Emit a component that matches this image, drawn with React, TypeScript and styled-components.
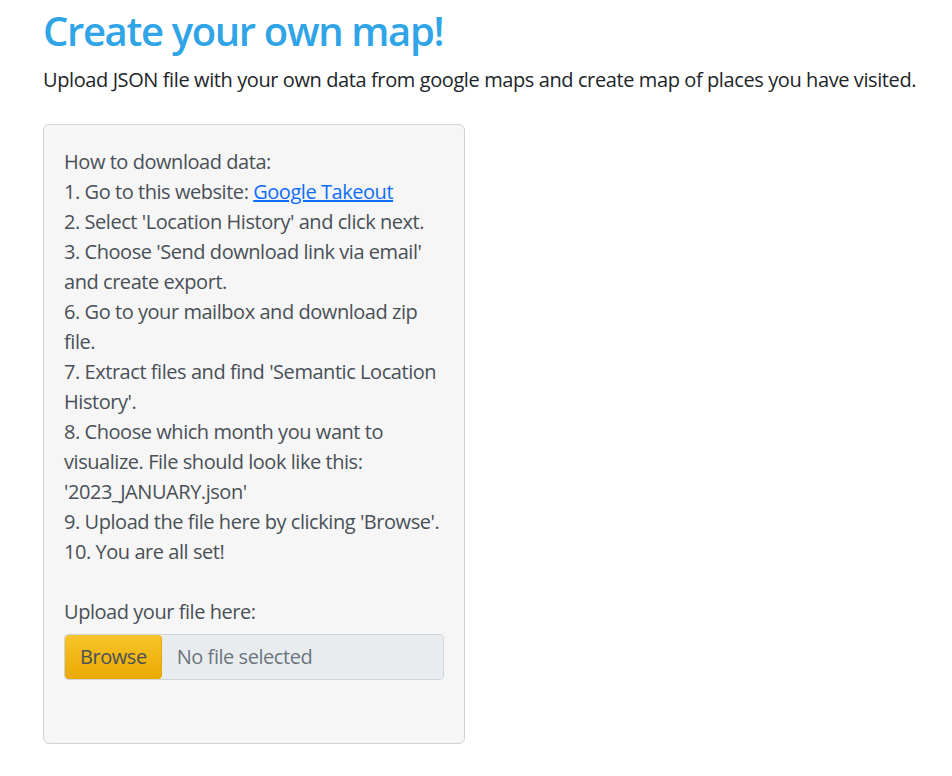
import React from 'react';
import styled, { createGlobalStyle } from 'styled-components';

const GlobalStyle = createGlobalStyle`
    html, body {
        margin: 0;
        padding: 0;
        background: #ffffff;
    }
    body {
        font-family: "Open Sans", "Noto Sans", sans-serif;
        font-size: 20px;
        line-height: 1.5;
        color: #495057;
    }
`;

const Page = styled.div`
    padding: 0 43px;
`;

const Title = styled.h1`
    margin: 0;
    padding-top: 7px;
    font-size: 40px;
    line-height: 48px;
    font-weight: 600;
    color: #2fa4e7;
    letter-spacing: -1.35px;
`;

const Lead = styled.p`
    margin: 10px 0 0;
    color: #212529;
    letter-spacing: -0.4px;
    white-space: nowrap;
`;

const Well = styled.div`
    width: 380px;
    margin-top: 29px;
    padding: 22px 20px 63px;
    background: #f6f6f6;
    border: 1px solid #d2d2d2;
    border-radius: 6px;
    letter-spacing: -0.45px;
`;

const Steps = styled.div`
    margin-bottom: 30px;
`;

const Line = styled.div`
    white-space: nowrap;
`;

const Link = styled.a`
    color: #0d6efd;
    text-decoration: underline;
`;

const Label = styled.div`
    margin-bottom: 7px;
`;

const FileInput = styled.div`
    display: flex;
    height: 46px;
    border: 1px solid #ced4da;
    border-radius: 4px;
    overflow: hidden;
    box-sizing: border-box;
`;

const BrowseButton = styled.div`
    display: flex;
    align-items: center;
    padding: 0 14px 0 15px;
    background: linear-gradient(#f9c42b, #e9a900);
    color: #495057;
    border-right: 1px solid #e4a700;
    border-radius: 4px;
`;

const FileName = styled.div`
    flex: 1;
    display: flex;
    align-items: center;
    padding: 0 15px;
    background: #e9ecef;
    color: #6c757d;
`;

// lines of the instructions, wrapped as in the panel
const lines = [
    "2. Select 'Location History' and click next.",
    "3. Choose 'Send download link via email'",
    'and create export.',
    '6. Go to your mailbox and download zip',
    'file.',
    "7. Extract files and find 'Semantic Location",
    "History'.",
    '8. Choose which month you want to',
    'visualize. File should look like this:',
    "'2023_JANUARY.json'",
    "9. Upload the file here by clicking 'Browse'.",
    '10. You are all set!',
];

export default function App() {
    return (
        <Page>
            <GlobalStyle />
            <Title>Create your own map!</Title>
            <Lead>Upload JSON file with your own data from google maps and create map of places you have visited.</Lead>
            <Well>
                <Steps>
                    <Line>How to download data:</Line>
                    <Line>1. Go to this website: <Link href="#">Google Takeout</Link></Line>
                    {lines.map((text, index) => (
                        <Line key={index}>{text}</Line>
                    ))}
                </Steps>
                <Label>Upload your file here:</Label>
                <FileInput>
                    <BrowseButton>Browse</BrowseButton>
                    <FileName>No file selected</FileName>
                </FileInput>
            </Well>
        </Page>
    );
}
